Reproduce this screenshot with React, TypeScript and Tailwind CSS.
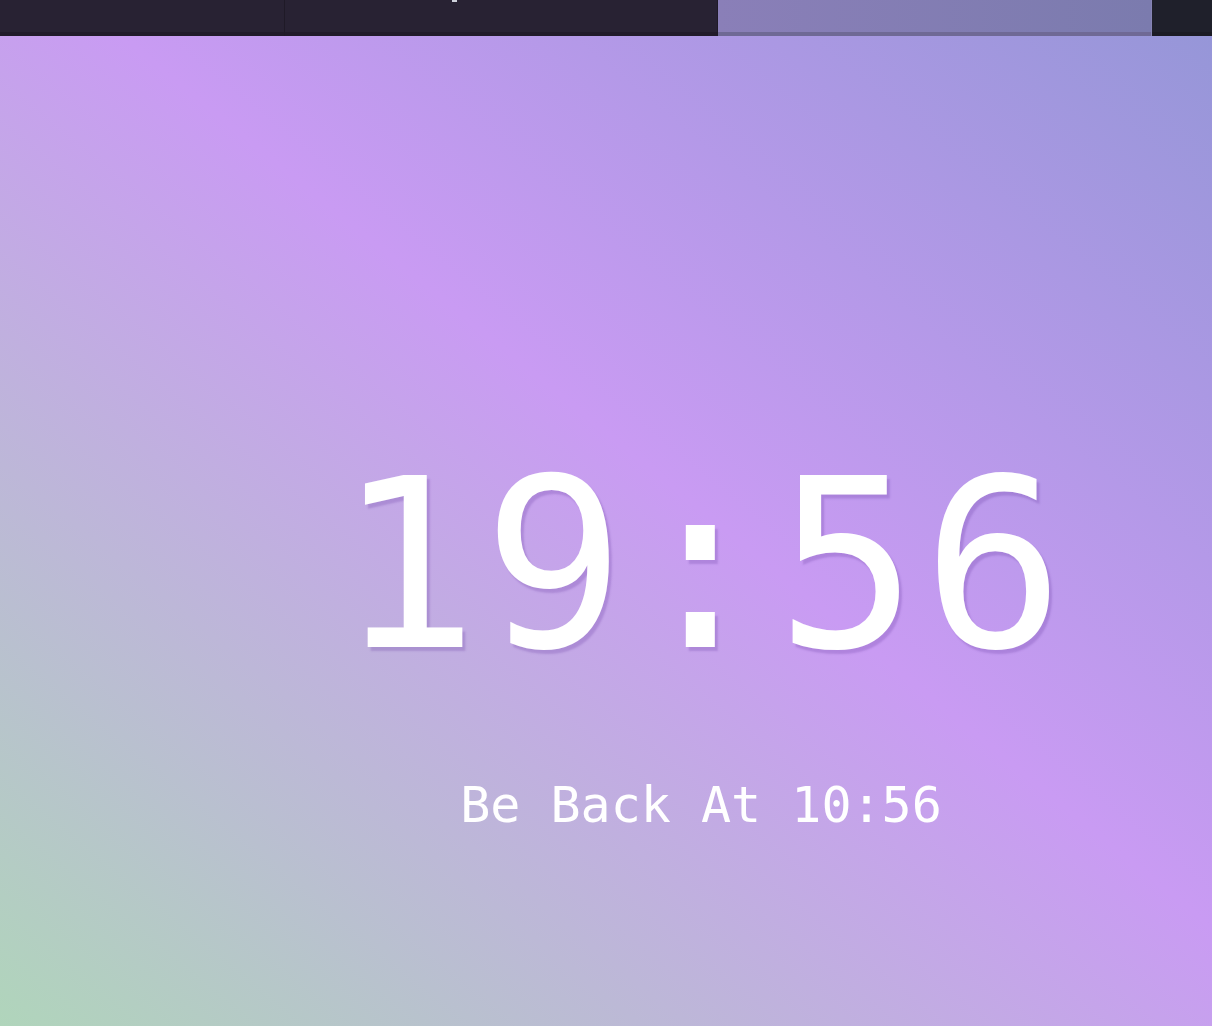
const Tab = ({ width, active = false, children }: { width: string; active?: boolean; children?: React.ReactNode }) => {
  if (active) {
    return (
      <div className={`${width} relative flex h-full flex-col border-r border-[#8684b4]`}>
        <div className="flex-1 bg-[linear-gradient(to_right,#8a7fb8,#7b7bae)]" />
        <div className="h-1 bg-[#6f6995]" />
      </div>
    );
  }
  return (
    <div className={`${width} relative flex h-full flex-col border-r border-[#1f1a27]`}>
      <div className="flex-1 bg-[#282233]">{children}</div>
      <div className="h-1 bg-[#211b2a]" />
    </div>
  );
};

const App = () => {
  return (
    <div className="flex h-[1026px] w-[1212px] flex-col overflow-hidden">
      <div className="flex h-9 shrink-0 bg-[#1f202a]">
        <Tab width="w-[285px]" />
        <Tab width="w-[433px]">
          <div className="ml-[167px] h-[2px] w-[5px] bg-[#cfd2dc]" />
        </Tab>
        <Tab width="w-[434px]" active />
        <div className="flex flex-1 flex-col">
          <div className="flex-1 bg-[#1f202b]" />
          <div className="h-1 bg-[#1b1b24]" />
        </div>
      </div>

      <main className="flex flex-1 flex-col items-center bg-[linear-gradient(to_top_right,#b0d5bb_0%,#c99bf3_55%,#9696d8_100%)] pl-[190px] font-['DejaVu_Sans_Mono',monospace] text-white">
        <div className="ml-[4px] mt-[412px] text-[235px] leading-none tracking-[5px] [text-shadow:3px_4px_2px_rgba(110,70,170,0.28)]">
          19:56
        </div>
        <div className="mt-[97px] text-[50px] leading-none">Be Back At 10:56</div>
      </main>
    </div>
  );
};

export default App;
